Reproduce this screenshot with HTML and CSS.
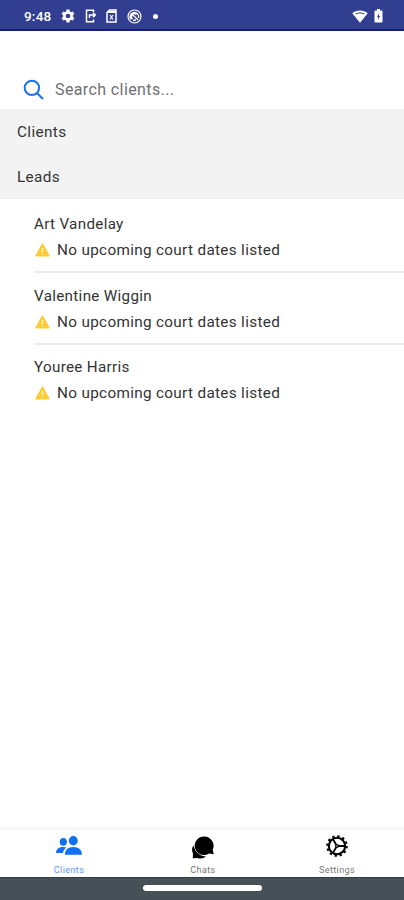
FILE: index.html
```
<!DOCTYPE html>
<html lang="en">
<head>
<meta charset="utf-8">
<title>Clients</title>
<link rel="stylesheet" href="styles.css">
</head>
<body>
<div class="app">
  <header class="status">
    <span class="time">9:48</span>
    <svg class="s-gear" width="14" height="14" viewBox="0 0 24 24"><path fill="#fff" fill-rule="evenodd" d="M9.500 1h5l.7 3.300 2 1.200 3.200-1.100 2.500 4.300-2.500 2.200v2.200l2.500 2.200-2.500 4.300-3.200-1.100-2 1.200-.7 3.300h-5l-.7-3.300-2-1.200-3.200 1.100-2.500-4.300 2.500-2.200v-2.200L1.100 8.700l2.500-4.300 3.200 1.100 2-1.200zM12 8a4 4 0 1 0 0 8 4 4 0 0 0 0-8z"/></svg>
    <svg class="s-phone" width="12" height="14" viewBox="0 0 12 14" fill="none" stroke="#fff" stroke-width="1.500"><path d="M8.500 3V1.200H1.500v11.600H8.500V10.500"/><path d="M4.500 9V6H10M8 3.800 10.300 6 8 8.200"/></svg>
    <svg class="s-sim" width="11" height="14" viewBox="0 0 11 14" fill="none" stroke="#fff" stroke-width="1.500"><path d="M3.500 1H10v12H1V3.500z"/><path d="M1 3h9" stroke-width="2"/><path d="m4 6 3 4.500M7 6l-3 4.500" stroke-width="1.200"/></svg>
    <svg class="s-round" width="15" height="15" viewBox="0 0 15 15" fill="none" stroke="#fff"><circle cx="7.500" cy="7.500" r="6.500" stroke-width="1.200"/><path d="M4 10.500A4.300 4.300 0 1 1 11.500 9M5.500 10A3 3 0 0 1 9.500 5.500M6 6l5 5M6 11.500l3-.5" stroke-width="1.300"/></svg>
    <span class="dot"></span>
    <svg class="s-wifi" width="16" height="13" viewBox="0 0 16 13"><path fill="#fff" d="M.3 3.300C4.500-.4 11.500-.4 15.700 3.300L8 12.800z"/><path d="M3.500 3.800q4.500-2 9 0" fill="none" stroke="#323f91" stroke-width="1"/></svg>
    <svg class="s-batt" width="9" height="14" viewBox="0 0 9 14"><path fill="#fff" d="M3 0h3v1.500h1.500q1 0 1 1v10q0 1-1 1h-6q-1 0-1-1v-10q0-1 1-1H3z"/><path fill="#323f91" d="M5 4 3 8h1.200v3L6 7H4.900z"/></svg>
  </header>
  <label class="search">
    <svg width="22" height="22" viewBox="0 0 22 22" fill="none" stroke="#1b72f0" stroke-width="2" stroke-linecap="round"><circle cx="8.900" cy="8.900" r="7.200"/><path d="m14.200 14.200 5.300 5.300"/></svg>
    <span>Search clients...</span>
  </label>
  <section class="groups">
    <h2>Clients</h2>
    <h2>Leads</h2>
  </section>
  <ul class="list">
    <li>
      <div class="name">Art Vandelay</div>
      <div class="note"><svg width="15" height="14" viewBox="0 0 15 14"><path fill="#fdcb35" stroke="#fdcb35" stroke-width="1.400" stroke-linejoin="round" d="M7.500 1.200 14 12.800H1z"/><path d="M7.500 5v4M7.500 10.300v1.400" stroke="#fff3c4" stroke-width="1.400"/></svg><span>No upcoming court dates listed</span></div>
    </li>
    <li>
      <div class="name">Valentine Wiggin</div>
      <div class="note"><svg width="15" height="14" viewBox="0 0 15 14"><path fill="#fdcb35" stroke="#fdcb35" stroke-width="1.400" stroke-linejoin="round" d="M7.500 1.200 14 12.800H1z"/><path d="M7.500 5v4M7.500 10.300v1.400" stroke="#fff3c4" stroke-width="1.400"/></svg><span>No upcoming court dates listed</span></div>
    </li>
    <li>
      <div class="name">Youree Harris</div>
      <div class="note"><svg width="15" height="14" viewBox="0 0 15 14"><path fill="#fdcb35" stroke="#fdcb35" stroke-width="1.400" stroke-linejoin="round" d="M7.500 1.200 14 12.800H1z"/><path d="M7.500 5v4M7.500 10.300v1.400" stroke="#fff3c4" stroke-width="1.400"/></svg><span>No upcoming court dates listed</span></div>
    </li>
  </ul>
  <nav class="tabs">
    <a class="tab active">
      <svg width="28" height="26" viewBox="0 0 28 26" fill="#0f70f0"><ellipse cx="8.300" cy="8.800" rx="3.600" ry="3.900"/><path d="M1 20c0-4.200 3.500-6 7.300-6 1.200 0 2.200.2 3.100.5C9.300 16 8.300 17.800 8 20z"/><ellipse cx="18.300" cy="7.800" rx="4.500" ry="4.700"/><path d="M9.800 21.700c0-5 3.600-7.700 8.500-7.700s8.700 2.700 8.700 7.700z"/></svg>
      <span>Clients</span>
    </a>
    <a class="tab">
      <svg width="28" height="26" viewBox="0 0 28 26"><path d="M4.500 12.500C2.500 15 3 18.500 4 20.500L3.800 25.200 8.700 24.900C11 26 15 25.500 17 23.500 10.500 23 6 19 4.500 12.500z"/><path d="M15.500 3.500a9.300 9.300 0 0 1 8.200 13.300l1.100 4.500-4.600-.8A9.300 9.300 0 1 1 15.500 3.500z"/></svg>
      <span>Chats</span>
    </a>
    <a class="tab">
      <svg width="28" height="26" viewBox="0 0 28 26" fill="none" stroke="#000"><circle cx="14" cy="13" r="9.800" stroke-width="2" stroke-dasharray="2.400 2.731"/><circle cx="14" cy="13" r="8.200" stroke-width="2.100"/><circle cx="14" cy="13" r="1.300" stroke-width="1.300"/><path d="M15 13h7M13.400 12 10 6.200M13.400 14 10 19.800" stroke-width="1.800"/></svg>
      <span>Settings</span>
    </a>
  </nav>
  <footer class="system"><span class="handle"></span></footer>
</div>
</body>
</html>
```
FILE: styles.css
```
* { box-sizing: border-box; }
body { margin: 0; background: #fff; font-family: Roboto, "Liberation Sans", sans-serif; color: #333; }
svg { display: block; flex: none; }
.app { width: 404px; height: 900px; display: flex; flex-direction: column; overflow: hidden; }
.status { height: 31px; flex: none; background: #323f91; border-bottom: 2px solid #141c7c; display: flex; align-items: center; padding: 3px 21px 0 24px; color: #fff; }
.time { font-size: 13.5px; font-weight: 500; width: 37px; letter-spacing: .2px; }
.s-phone { margin-left: 10px; }
.s-sim { margin-left: 9px; }
.s-round { margin-left: 10px; }
.dot { width: 5px; height: 5px; border-radius: 50%; background: #fff; margin-left: 11px; }
.s-wifi { margin-left: auto; }
.s-batt { margin-left: 6px; }
.search { height: 78px; flex: none; display: flex; align-items: flex-end; padding: 0 23px 8px; gap: 10px; font-size: 16px; line-height: 22px; letter-spacing: .39px; color: #707070; }
.groups { flex: none; height: 90px; background: #f3f3f3; border-bottom: 1px solid #ebebeb; }
.groups h2 { margin: 0; height: 45px; padding: 1px 17px 0; line-height: 45px; font-size: 15.3px; font-weight: 400; letter-spacing: .38px; }
.list { flex: 1; margin: 0; padding: 0 0 0 34px; list-style: none; }
.list li { height: 72px; padding-top: 13px; border-bottom: 2px solid #ededed; margin-top: 2px; margin-bottom: -2px; }
.list li:last-child { border-bottom: 0; margin-top: 1px; }
.name { font-size: 15.2px; line-height: 20px; letter-spacing: .32px; }
.note { display: flex; align-items: center; gap: 7px; padding-left: 1px; margin-top: 6px; font-size: 15.3px; line-height: 20px; letter-spacing: .32px; white-space: nowrap; }
.tabs { height: 50px; flex: none; border-top: 3px solid #f7f7f7; padding-left: 2px; display: grid; grid-template-columns: repeat(3, 1fr); }
.tab { display: flex; flex-direction: column; align-items: center; padding-top: 3px; font-size: 9px; line-height: 11px; letter-spacing: .4px; color: #777; }
.tab span { margin-top: 6px; }
.tab.active { color: #5c97f5; }
.system { height: 23px; flex: none; background: #465057; border-top: 1px solid #2f3d45; display: flex; justify-content: center; }
.handle { width: 119px; height: 6px; margin-top: 7px; border-radius: 3px; background: #fff; }
```
